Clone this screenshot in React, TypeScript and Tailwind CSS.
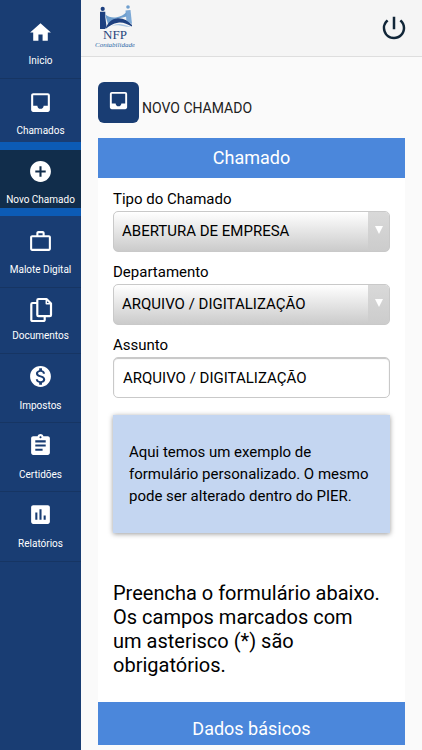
import type { ReactNode } from 'react'
import clsx from 'clsx'
import {
  MdAddCircle,
  MdAssessment,
  MdAssignment,
  MdHome,
  MdInbox,
  MdMonetizationOn,
  MdPowerSettingsNew,
  MdWorkOutline,
} from 'react-icons/md'

function DocumentsIcon() {
  return (
    <svg viewBox="0 0 24 26" className="h-[26px] w-6" fill="none" stroke="currentColor" strokeWidth="2.200" strokeLinejoin="round" aria-hidden="true">
      <path d="M9.500 2h8L22 6.500V18a1.200 1.200 0 0 1-1.200 1.200H9.500A1.200 1.200 0 0 1 8.300 18V3.200A1.200 1.200 0 0 1 9.500 2z" />
      <path d="M17.300 2.500v4.200h4.200" strokeWidth="1.500" />
      <path d="M8 6H3.500A1.200 1.200 0 0 0 2.300 7.200v15.600A1.200 1.200 0 0 0 3.500 24h11a1.200 1.200 0 0 0 1.200-1.200V19.500" />
    </svg>
  )
}

function Logo() {
  return (
    <svg viewBox="0 0 40 46" className="h-[46px] w-10" role="img" aria-label="NFP Contabilidade">
      <circle cx="7.700" cy="4.900" r="2.100" fill="#1d4080" />
      <path d="M5 7.800h5.300v5.200l1.200 9.500L10 25H5z" fill="#1d4080" />
      <circle cx="33" cy="3" r="1.800" fill="#6f9fce" />
      <path d="M30.500 6.500l5-.5 1.500 14-5.500-2.500z" fill="#7da9d6" />
      <path d="M10.300 10.500c3 2.500 7 3.600 11.500 2.800 4-.8 7-2.500 9.700-5.300v4.500c-3.500 1.200-6.500 1.700-10 2.300-3 .7-6 2.700-8.200 6.200L11 13.500z" fill="#6f9fce" />
      <path d="M10.500 25c2-6.500 6-10 12-10.700 5.500-.5 10 2 14.500 6.700v1.500c-5-2.500-9-4.500-14-3.800-5 .6-8.500 3-12.500 6.300z" fill="#1d4080" />
      <path d="M16 22.500c3-2 5.500-2.800 9-2.500 4 .3 7.500 2 11 2.500-3.500.8-7-.2-11-1-3.500-.5-6-.2-9 1z" fill="#a9c6e4" />
      <text x="20" y="35" textAnchor="middle" fontSize="13" fill="#27457d" fontFamily="'Liberation Serif', serif">
        NFP
      </text>
      <text x="20" y="43" textAnchor="middle" fontSize="7" fontStyle="italic" fill="#2f6ba8" fontFamily="'Liberation Serif', serif">
        Contabilidade
      </text>
    </svg>
  )
}

const MENU = [
  { label: 'Inicio', icon: <MdHome />, box: 'h-[69px] pt-[10px] pb-[9px] border-b' },
  { label: 'Chamados', icon: <MdInbox />, box: 'h-[63px] pt-[11px] pb-[3px]' },
  { label: 'Novo Chamado', icon: <MdAddCircle />, box: 'h-[74px] pt-[9px]', active: true },
  { label: 'Malote Digital', icon: <MdWorkOutline />, box: 'h-[72px] pt-[13px] pb-[9px] border-b' },
  { label: 'Documentos', icon: <DocumentsIcon />, box: 'h-[66px] pt-[9px] pb-[9px] border-b' },
  { label: 'Impostos', icon: <MdMonetizationOn />, box: 'h-[69px] pt-[10px] pb-[8px] border-b' },
  { label: 'Certidões', icon: <MdAssignment />, box: 'h-[69px] pt-[10px] pb-[8px] border-b' },
  { label: 'Relatórios', icon: <MdAssessment />, box: 'h-[70px] pt-[10px] pb-[9px] border-b' },
]

function Sidebar() {
  return (
    <nav className="w-[81px] shrink-0 bg-[#193d73] pt-[10px] text-white">
      {MENU.map(({ label, icon, box, active }) => (
        <a
          key={label}
          href="#"
          aria-current={active ? 'page' : undefined}
          className={clsx(
            'flex flex-col items-center justify-between',
            box,
            active ? 'border-y-8 border-[#0c5bb5] bg-[#112d4b]' : 'border-[#163563]',
          )}
        >
          <span className="text-[25px] leading-none">{icon}</span>
          <span className="whitespace-nowrap text-[10px] leading-4">{label}</span>
        </a>
      ))}
    </nav>
  )
}

function Field({ id, label, children }: { id: string; label: string; children: ReactNode }) {
  return (
    <div>
      <label htmlFor={id} className="block pb-px text-[15px] leading-[22px]">
        {label}
      </label>
      {children}
    </div>
  )
}

function SelectField({ id, label, value }: { id: string; label: string; value: string }) {
  return (
    <Field id={id} label={label}>
      <div className="relative">
        <select
          id={id}
          className="block h-[41px] w-full appearance-none rounded-[5px] border border-[#c9c9c9] bg-linear-to-b from-white to-[#cbcbcb] pr-6 pl-2 text-[15px] text-black"
        >
          <option>{value}</option>
        </select>
        <span className="pointer-events-none absolute inset-y-px right-px flex w-[21px] items-center justify-center rounded-r bg-linear-to-b from-[#d9d9d9] to-[#cccccc]">
          <svg viewBox="0 0 8 8" className="mb-1 size-2" aria-hidden="true">
            <path d="M0 0h8L4 8z" fill="#fff" />
          </svg>
        </span>
      </div>
    </Field>
  )
}

export default function App() {
  return (
    <div className="flex min-h-screen bg-[#fafafa] font-['Roboto',sans-serif] text-black">
      <Sidebar />
      <div className="min-w-0 flex-1">
        <header className="flex h-[57px] items-start justify-between border-b border-[#dedede] bg-[#f5f5f5] pt-1 pr-[13px] pl-[14px]">
          <Logo />
          <button type="button" aria-label="Sair" className="pt-[9px] text-[#112638]">
            <MdPowerSettingsNew className="size-[30px]" />
          </button>
        </header>

        <main className="px-[17px] pt-[25px] pb-[5px]">
          <div className="flex items-end">
            <span className="flex h-[41px] w-[41px] items-center justify-center rounded-md bg-[#193d73] pb-1 text-white">
              <MdInbox className="size-[23px]" />
            </span>
            <h1 className="pb-1 pl-[3px] text-sm leading-[22px] text-[#212121]">NOVO CHAMADO</h1>
          </div>

          <form className="mt-[15px] bg-white">
            <h2 className="bg-[#4b87db] text-center text-lg leading-10 text-white">Chamado</h2>
            <div className="px-[15px] pt-[10px]">
              <div className="flex flex-col gap-[9px]">
                <SelectField id="tipo" label="Tipo do Chamado" value="ABERTURA DE EMPRESA" />
                <SelectField id="departamento" label="Departamento" value="ARQUIVO / DIGITALIZAÇÃO" />
                <Field id="assunto" label="Assunto">
                  <input
                    id="assunto"
                    type="text"
                    defaultValue="ARQUIVO / DIGITALIZAÇÃO"
                    className="block h-[41px] w-full rounded-[5px] border border-[#c9c9c9] bg-white px-[9px] text-[15px] inset-shadow-[0_1px_1px_#c4c4c4]"
                  />
                </Field>
              </div>

              <p className="mt-[17px] bg-[#c4d6f1] px-4 py-[26px] text-[15px] leading-[22px] shadow-[0_1px_5px_rgba(0,0,0,0.4)]">
                Aqui temos um exemplo de formulário personalizado. O mesmo pode ser alterado dentro do PIER.
              </p>
              <p className="mt-12 pr-2 pb-[25px] text-xl leading-6">
                Preencha o formulário abaixo. Os campos marcados com um asterisco (*) são obrigatórios.
              </p>
            </div>
            <h2 className="bg-[#4b87db] pt-[10px] text-center text-lg leading-[33px] text-white">Dados básicos</h2>
          </form>
        </main>
      </div>
    </div>
  )
}
